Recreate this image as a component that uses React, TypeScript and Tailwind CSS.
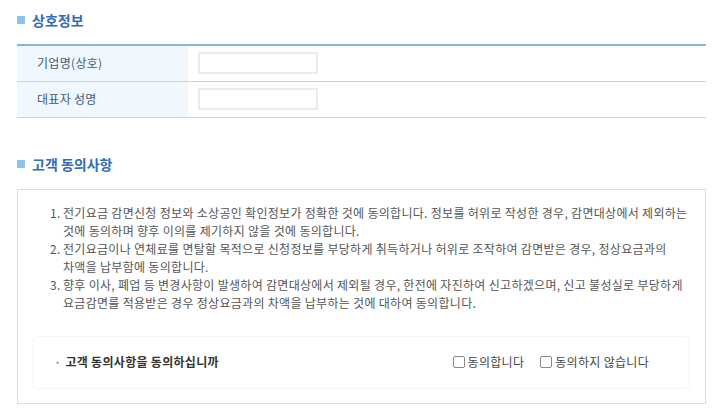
import React from "react";

const font = {
  fontFamily: '"Noto Sans CJK KR", "Noto Sans", sans-serif',
};

const SectionTitle = ({ title }: { title: string }) => (
  <h2 className="flex items-center gap-[7px] text-[14px] font-bold leading-[20px] text-[#2f6db5]">
    <span className="inline-block h-[8px] w-[8px] bg-[#8ec4ec]" />
    {title}
  </h2>
);

const Checkbox = ({ label }: { label: string }) => (
  <label className="flex items-center gap-[3px]">
    <span className="inline-block h-[12px] w-[12px] rounded-[2px] border border-[#8a8a8a] bg-white" />
    <span>{label}</span>
  </label>
);

const terms = [
  [
    "전기요금 감면신청 정보와 소상공인 확인정보가 정확한 것에 동의합니다. 정보를 허위로 작성한 경우, 감면대상에서 제외하는",
    "것에 동의하며 향후 이의를 제기하지 않을 것에 동의합니다.",
  ],
  [
    "전기요금이나 연체료를 면탈할 목적으로 신청정보를 부당하게 취득하거나 허위로 조작하여 감면받은 경우, 정상요금과의",
    "차액을 납부함에 동의합니다.",
  ],
  [
    "향후 이사, 폐업 등 변경사항이 발생하여 감면대상에서 제외될 경우, 한전에 자진하여 신고하겠으며, 신고 불성실로 부당하게",
    "요금감면를 적용받은 경우 정상요금과의 차액을 납부하는 것에 대하여 동의합니다.",
  ],
];

export default function App() {
  return (
    <div className="min-h-screen bg-white pl-[17px] pr-[14px] pt-[10px]" style={font}>
      <SectionTitle title="상호정보" />

      <table className="mt-[14px] w-full border-collapse border-t-2 border-[#86b5df] text-[12px] text-[#3e5a78]">
        <tbody>
          {["기업명(상호)", "대표자 성명"].map((label) => (
            <tr key={label} className="border-b border-[#bcd7ee]">
              <th className="h-[36px] w-[171px] bg-[#f0f7fd] pl-[20px] text-left font-normal tracking-[0.3px]">
                {label}
              </th>
              <td className="pl-[10px]">
                <input
                  type="text"
                  className="block h-[22px] w-[120px] border-2 border-[#ebebeb] bg-white outline-none"
                />
              </td>
            </tr>
          ))}
        </tbody>
      </table>

      <div className="mt-[36px]">
        <SectionTitle title="고객 동의사항" />
      </div>

      <div className="mt-[15px] border border-[#dedede] px-[15px] pb-[14px] pt-[14px] text-[12px] tracking-[0.3px] text-[#555]">
        <ol className="pl-[17px] leading-[18px]">
          {terms.map((lines, i) => (
            <li key={i} className="flex whitespace-nowrap">
              <span className="w-[13px] shrink-0">{i + 1}.</span>
              <span className="flex flex-col">
                {lines.map((l) => (
                  <span key={l}>{l}</span>
                ))}
              </span>
            </li>
          ))}
        </ol>

        <div className="mt-[24px] flex h-[53px] items-center rounded-[4px] border border-[#f5f5f5] pl-[20px] pr-[40px]">
          <p className="flex-1 font-bold text-[#333]">
            <span className="mr-[4px] text-[#999]">·</span>고객 동의사항을 동의하십니까
          </p>
          <div className="flex items-center gap-[16px] text-[#444]">
            <Checkbox label="동의합니다" />
            <Checkbox label="동의하지 않습니다" />
          </div>
        </div>
      </div>
    </div>
  );
}
